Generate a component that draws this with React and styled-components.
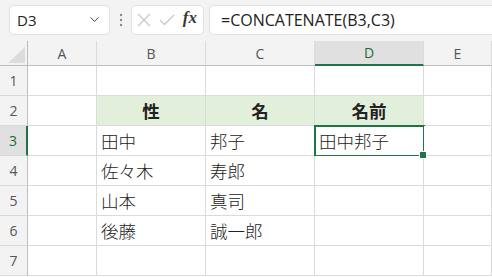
import React from 'react'
import styled, { createGlobalStyle } from 'styled-components'
import { ChevronDown } from 'lucide-react'

const columns = ['A', 'B', 'C', 'D', 'E']
const rows = [
    { n: 1, cells: ['', '', '', '', ''] },
    { n: 2, cells: ['', '性', '名', '名前', ''], head: true },
    { n: 3, cells: ['', '田中', '邦子', '田中邦子', ''] },
    { n: 4, cells: ['', '佐々木', '寿郎', '', ''] },
    { n: 5, cells: ['', '山本', '真司', '', ''] },
    { n: 6, cells: ['', '後藤', '誠一郎', '', ''] },
    { n: 7, cells: ['', '', '', '', ''] },
]
const activeCol = 'D'
const activeRow = 3

export default function App() {
    return (
        <>
            <GlobalStyle />
            <Toolbar>
                <NameBox>
                    <span>D3</span>
                    <ChevronDown size={15} strokeWidth={1.6} color="#444" />
                </NameBox>
                <Dots width="4" height="14" viewBox="0 0 4 14">
                    <circle cx="2" cy="2" r="1.2" fill="#8a8a8a" />
                    <circle cx="2" cy="7" r="1.2" fill="#8a8a8a" />
                    <circle cx="2" cy="12" r="1.2" fill="#8a8a8a" />
                </Dots>
                <FxButtons>
                    <svg width="14" height="14" viewBox="0 0 14 14">
                        <path d="M1 1 L13 13 M13 1 L1 13" stroke="#c9c9c9" strokeWidth="1.3" fill="none" />
                    </svg>
                    <svg width="16" height="12" viewBox="0 0 16 12">
                        <path d="M1 6 L5.5 10.5 L15 1" stroke="#c9c9c9" strokeWidth="1.3" fill="none" />
                    </svg>
                    <Fx>fx</Fx>
                </FxButtons>
                <FormulaInput>=CONCATENATE(B3,C3)</FormulaInput>
            </Toolbar>

            <Grid>
                <Corner>
                    <svg width="17" height="16" viewBox="0 0 17 16">
                        <polygon points="17,0 17,16 0,16" fill="#dcdcdc" />
                    </svg>
                </Corner>
                {columns.map((c) => (
                    <ColHead key={c} $active={c === activeCol}>{c}</ColHead>
                ))}

                {rows.map(({ n, cells, head }) => (
                    <React.Fragment key={n}>
                        <RowHead $active={n === activeRow}>{n}</RowHead>
                        {cells.map((text, i) => {
                            const col = columns[i]
                            const filled = head && col >= 'B' && col <= 'D'
                            const selected = col === activeCol && n === activeRow
                            return (
                                <Cell key={col} $head={filled} $selected={selected}>
                                    {text}
                                    {selected && <Handle />}
                                </Cell>
                            )
                        })}
                    </React.Fragment>
                ))}
            </Grid>
        </>
    )
}

const GlobalStyle = createGlobalStyle`
    body {
        margin: 0;
        background: #fff;
        font-family: "Open Sans", "Noto Sans CJK JP", sans-serif;
        overflow: hidden;
    }
`
const Toolbar = styled.div`
    display: flex;
    align-items: center;
    height: 41px;
    padding: 0 0 2px 9px;
    box-sizing: border-box;
    background: #f3f3f3;
`
const Box = styled.div`
    height: 30px;
    box-sizing: border-box;
    background: #fff;
    border: 1px solid #e1e1e1;
    border-radius: 5px;
    display: flex;
    align-items: center;
`
const NameBox = styled(Box)`
    width: 101px;
    padding: 0 7px 0 7px;
    justify-content: space-between;
    font-size: 15px;
    color: #222;
`
const Dots = styled.svg`
    margin: 0 8px 0 9px;
`
const FxButtons = styled(Box)`
    width: 73px;
    padding: 0 6px 0 5px;
    justify-content: space-between;
`
const Fx = styled.span`
    font-family: "Liberation Serif", serif;
    font-style: italic;
    font-weight: bold;
    font-size: 17px;
    color: #3a3a3a;
    margin-top: -3px;
`
const FormulaInput = styled(Box)`
    flex: 1;
    margin-left: 5px;
    padding-left: 11px;
    border-right: none;
    border-radius: 5px 0 0 5px;
    font-size: 16px;
    color: #222;
`
const Grid = styled.div`
    display: grid;
    grid-template-columns: 28px 69px 109px 109px 109px 1fr;
    grid-template-rows: 25px repeat(7, 30px);
`
const Corner = styled.div`
    background: #f3f3f3;
    border-right: 1px solid #bdbdbd;
    border-bottom: 1px solid #bdbdbd;
    display: flex;
    align-items: flex-end;
    justify-content: flex-end;
    padding: 0 2px 2px 0;
`
const ColHead = styled.div`
    display: flex;
    align-items: center;
    justify-content: center;
    font-size: 14px;
    color: ${(p) => (p.$active ? '#1e6b41' : '#555')};
    background: ${(p) => (p.$active ? '#e0e0e0' : '#f3f3f3')};
    border-right: 1px solid #dadada;
    border-bottom: ${(p) => (p.$active ? '2px solid #217346' : '1px solid #bdbdbd')};
`
const RowHead = styled.div`
    display: flex;
    align-items: center;
    justify-content: center;
    font-size: 14px;
    color: ${(p) => (p.$active ? '#1e6b41' : '#555')};
    background: ${(p) => (p.$active ? '#e0e0e0' : '#f3f3f3')};
    border-bottom: 1px solid #dadada;
    border-right: ${(p) => (p.$active ? '2px solid #217346' : '1px solid #bdbdbd')};
`
const Cell = styled.div`
    position: relative;
    display: flex;
    align-items: center;
    justify-content: ${(p) => (p.$head ? 'center' : 'flex-start')};
    padding-left: ${(p) => (p.$head ? '0' : '4px')};
    font-family: "Noto Sans CJK JP", sans-serif;
    font-size: 17.5px;
    font-weight: ${(p) => (p.$head ? 700 : 300)};
    color: #222;
    background: ${(p) => (p.$head ? '#e2efda' : '#fff')};
    border-right: 1px solid #dadada;
    border-bottom: 1px solid #dadada;
    outline: ${(p) => (p.$selected ? '2px solid #217346' : 'none')};
    outline-offset: -1px;
`
const Handle = styled.span`
    position: absolute;
    right: -4px;
    bottom: -4px;
    width: 6px;
    height: 6px;
    background: #217346;
    border: 1px solid #fff;
    z-index: 1;
`
